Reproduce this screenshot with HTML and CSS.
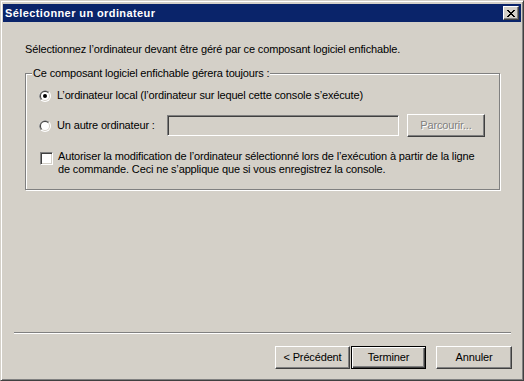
FILE: index.html
```html
<!DOCTYPE html>
<html lang="fr">
<head>
  <meta charset="UTF-8">
  <title>Sélectionner un ordinateur</title>
  <link rel="stylesheet" href="styles.css">
</head>
<body>

<div class="window">
  <div class="titlebar">
    <span class="title">Sélectionner un ordinateur</span>
    <button class="close" title="Fermer">
      <svg width="8" height="7" viewBox="0 0 8 7" shape-rendering="crispEdges">
        <path fill="#000" d="M0 0h2v1H0zM6 0h2v1H6zM1 1h2v1H1zM5 1h2v1H5zM2 2h4v1H2zM3 3h2v1H3zM2 4h4v1H2zM1 5h2v1H1zM5 5h2v1H5zM0 6h2v1H0zM6 6h2v1H6z"/>
      </svg>
    </button>
  </div>

  <div class="content">
    <p class="intro">Sélectionnez l’ordinateur devant être géré par ce composant logiciel enfichable.</p>

    <fieldset class="group">
      <legend>Ce composant logiciel enfichable gérera toujours :</legend>
      <div class="group-body">
        <label class="option">
          <span class="radio">
            <svg width="12" height="12" viewBox="0 0 12 12">
              <circle cx="6" cy="6" r="6" fill="#fff"/>
              <path d="M1.76 10.24A6 6 0 0 1 10.24 1.76Z" fill="#808080"/>
              <circle cx="6" cy="6" r="5" fill="#d4d0c8"/>
              <path d="M2.46 9.54A5 5 0 0 1 9.54 2.46Z" fill="#404040"/>
              <circle cx="6" cy="6" r="4" fill="#fff"/>
              <circle cx="6" cy="6" r="2" fill="#000"/>
            </svg>
          </span>
          <span>L’ordinateur local (l’ordinateur sur lequel cette console s’exécute)</span>
        </label>

        <div class="option option-remote">
          <span class="radio">
            <svg width="12" height="12" viewBox="0 0 12 12">
              <circle cx="6" cy="6" r="6" fill="#fff"/>
              <path d="M1.76 10.24A6 6 0 0 1 10.24 1.76Z" fill="#808080"/>
              <circle cx="6" cy="6" r="5" fill="#d4d0c8"/>
              <path d="M2.46 9.54A5 5 0 0 1 9.54 2.46Z" fill="#404040"/>
              <circle cx="6" cy="6" r="4" fill="#fff"/>
            </svg>
          </span>
          <span class="remote-label">Un autre ordinateur :</span>
          <input class="field" type="text" disabled>
          <button class="btn btn-browse" disabled>Parcourir...</button>
        </div>

        <label class="check-row">
          <span class="checkbox"></span>
          <span>Autoriser la modification de l’ordinateur sélectionné lors de l’exécution à partir de la ligne<br>de commande. Ceci ne s’applique que si vous enregistrez la console.</span>
        </label>
      </div>
    </fieldset>
  </div>

  <div class="footer">
    <div class="separator"></div>
    <div class="buttons">
      <button class="btn">&lt; Précédent</button>
      <button class="btn btn-default">Terminer</button>
      <button class="btn btn-cancel">Annuler</button>
    </div>
  </div>
</div>

</body>
</html>
```

FILE: styles.css
```css
body {
  margin: 0;
  font-family: "Liberation Sans", Arial, sans-serif;
  font-size: 11px;
  line-height: 13px;
  letter-spacing: -0.15px;
  color: #000;
  background-color: #d4d0c8;
}
.window {
  box-sizing: border-box;
  width: 524px;
  height: 381px;
  display: flex;
  flex-direction: column;
  padding: 3px 2px 2px 2px;
  background-color: #d4d0c8;
  border: 1px solid;
  border-color: #d4d0c8 #404040 #404040 #d4d0c8;
  box-shadow: inset 1px 1px #fff, inset -1px -1px #808080;
}
.titlebar {
  height: 18px;
  display: flex;
  align-items: center;
  justify-content: space-between;
  padding: 0 2px;
  background-color: #0a246a;
  color: #fff;
  font-weight: bold;
  letter-spacing: 0.4px;
}
.close {
  box-sizing: border-box;
  width: 16px;
  height: 14px;
  padding: 0;
  display: flex;
  align-items: center;
  justify-content: center;
  background-color: #d4d0c8;
  border: 1px solid;
  border-color: #fff #404040 #404040 #fff;
  box-shadow: inset -1px -1px #808080;
}
.content {
  flex: 1;
  padding: 21px 21px 0 22px;
}
.intro {
  margin: 0 0 11px;
}
.group {
  margin: 0;
  padding: 0;
  min-width: 0;
  border: 1px solid #808080;
  box-shadow: 1px 1px 0 #fff, inset 1px 1px 0 #fff;
}
.group legend {
  margin-left: 6px;
  padding: 0 1px;
  background-color: #d4d0c8;
}
.group-body {
  padding: 9px 0 13px 13px;
}
.option {
  display: flex;
  align-items: center;
  gap: 6px;
}
.radio {
  display: flex;
  width: 12px;
  height: 12px;
}
.option-remote {
  margin-top: 12px;
}
.remote-label {
  width: 104px;
}
.field {
  box-sizing: border-box;
  width: 232px;
  height: 21px;
  margin: 0;
  background-color: #d4d0c8;
  border: 1px solid;
  border-color: #808080 #fff #fff #808080;
  box-shadow: inset 1px 1px #404040, inset -1px -1px #d4d0c8;
}
.check-row {
  display: flex;
  align-items: flex-start;
  gap: 5px;
  margin-top: 13px;
}
.checkbox {
  box-sizing: border-box;
  flex: none;
  width: 13px;
  height: 13px;
  margin: 2px 0 0 1px;
  background-color: #fff;
  border: 1px solid;
  border-color: #808080 #fff #fff #808080;
  box-shadow: inset 1px 1px #404040, inset -1px -1px #d4d0c8;
}
.footer {
  padding: 0 9px 9px 11px;
}
.separator {
  margin-right: 1px;
  border-top: 1px solid #808080;
  border-bottom: 1px solid #fff;
}
.buttons {
  display: flex;
  justify-content: flex-end;
  margin-top: 12px;
}
.btn {
  box-sizing: border-box;
  width: 75px;
  height: 23px;
  padding: 0;
  font: inherit;
  letter-spacing: inherit;
  color: #000;
  background-color: #d4d0c8;
  border: 1px solid;
  border-color: #fff #404040 #404040 #fff;
  box-shadow: inset -1px -1px #808080;
}
.btn-default {
  margin-left: 1px;
  border-color: #000;
  box-shadow: inset 1px 1px #fff, inset -1px -1px #404040, inset -2px -2px #808080;
}
.btn-cancel {
  width: 76px;
  margin-left: 10px;
}
.btn-browse {
  width: 78px;
  margin-left: 2px;
  color: #808080;
  text-shadow: 1px 1px 0 #fff;
}
```
